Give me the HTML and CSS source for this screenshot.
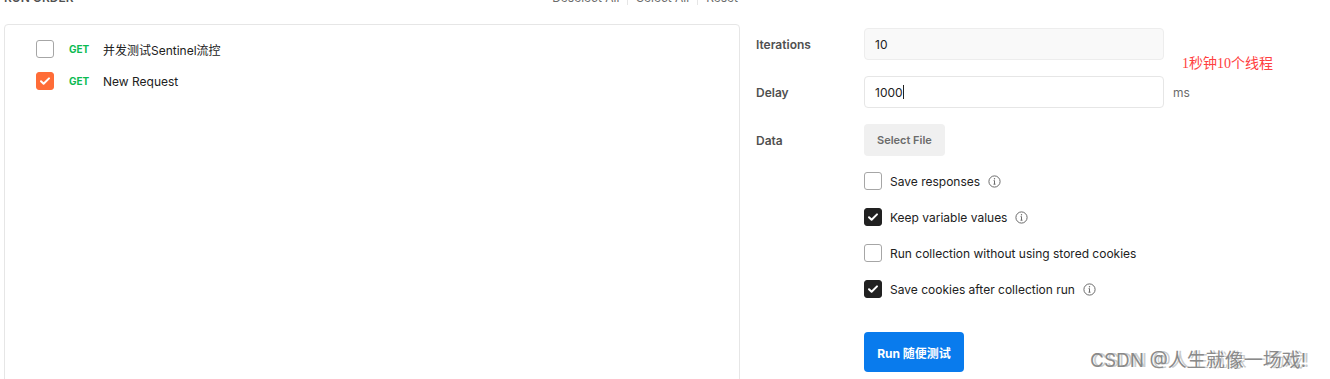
FILE: index.html
```html
<!DOCTYPE html>
<html lang="en">
<head>
    <meta charset="UTF-8">
    <meta name="viewport" content="width=device-width, initial-scale=1.0">
    <title>Collection Runner</title>
    <link rel="stylesheet" href="styles.css">
</head>
<body>

<div class="runner">
    <div class="order-col">
        <div class="order-head">
            <span class="order-title">RUN ORDER</span>
            <div class="order-links">
                <a href="#">Deselect All</a>
                <a href="#">Select All</a>
                <a href="#">Reset</a>
            </div>
        </div>
        <div class="order-list">
            <div class="order-row">
                <span class="box"></span>
                <span class="method">GET</span>
                <span class="req-name">并发测试Sentinel流控</span>
            </div>
            <div class="order-row">
                <span class="box box-orange">
                    <svg width="12" height="12" viewBox="0 0 12 12"><path d="M2 6.2l2.6 2.6L10 3.4" fill="none" stroke="#fff" stroke-width="2" stroke-linecap="round" stroke-linejoin="round"/></svg>
                </span>
                <span class="method">GET</span>
                <span class="req-name">New Request</span>
            </div>
        </div>
    </div>

    <div class="settings">
        <div class="field">
            <label class="field-label">Iterations</label>
            <input class="text-input input-grey" type="text" value="10">
        </div>
        <div class="field">
            <label class="field-label">Delay</label>
            <div class="input-wrap"><span class="text-input">1000<span class="caret"></span></span></div>
            <span class="unit">ms</span>
        </div>
        <div class="field">
            <label class="field-label">Data</label>
            <button class="file-btn">Select File</button>
        </div>

        <div class="options">
            <div class="option">
                <span class="box box-small"></span>
                <span>Save responses</span>
                <svg class="info" width="13" height="13" viewBox="0 0 13 13"><circle cx="6.5" cy="6.5" r="5.6" fill="none" stroke="#6b6b6b" stroke-width="1"/><path d="M6.5 5.6v3.6M5.5 9.2h2M5.6 5.6h0.9" stroke="#6b6b6b" stroke-width="1" fill="none"/><circle cx="6.5" cy="3.8" r="0.7" fill="#6b6b6b"/></svg>
            </div>
            <div class="option">
                <span class="box box-small box-dark">
                    <svg width="12" height="12" viewBox="0 0 12 12"><path d="M2 6.2l2.6 2.6L10 3.4" fill="none" stroke="#fff" stroke-width="2" stroke-linecap="round" stroke-linejoin="round"/></svg>
                </span>
                <span>Keep variable values</span>
                <svg class="info" width="13" height="13" viewBox="0 0 13 13"><circle cx="6.5" cy="6.5" r="5.6" fill="none" stroke="#6b6b6b" stroke-width="1"/><path d="M6.5 5.6v3.6M5.5 9.2h2M5.6 5.6h0.9" stroke="#6b6b6b" stroke-width="1" fill="none"/><circle cx="6.5" cy="3.8" r="0.7" fill="#6b6b6b"/></svg>
            </div>
            <div class="option">
                <span class="box box-small"></span>
                <span>Run collection without using stored cookies</span>
            </div>
            <div class="option">
                <span class="box box-small box-dark">
                    <svg width="12" height="12" viewBox="0 0 12 12"><path d="M2 6.2l2.6 2.6L10 3.4" fill="none" stroke="#fff" stroke-width="2" stroke-linecap="round" stroke-linejoin="round"/></svg>
                </span>
                <span>Save cookies after collection run</span>
                <svg class="info" width="13" height="13" viewBox="0 0 13 13"><circle cx="6.5" cy="6.5" r="5.6" fill="none" stroke="#6b6b6b" stroke-width="1"/><path d="M6.5 5.6v3.6M5.5 9.2h2M5.6 5.6h0.9" stroke="#6b6b6b" stroke-width="1" fill="none"/><circle cx="6.5" cy="3.8" r="0.7" fill="#6b6b6b"/></svg>
            </div>
        </div>

        <button class="run-btn">Run 随便测试</button>

        <!-- note written on top of the screenshot -->
        <span class="note">1秒钟10个线程</span>
        <span class="watermark">CSDN @人生就像一场戏!</span>
    </div>
</div>

</body>
</html>
```

FILE: styles.css
```css
body {
  margin: 0;
  font-family: Inter, "Noto Sans", "Noto Sans CJK SC", sans-serif;
  color: #212121;
  background-color: white;
  overflow: hidden;
}

.runner {
  display: flex;
  margin-top: -9px;
  padding-left: 4px;
}

.order-col {
  width: 736px;
  display: flex;
  flex-direction: column;
}

.order-head {
  height: 33px;
  display: flex;
  justify-content: space-between;
  align-items: flex-start;
  font-size: 12px;
  line-height: 14px;
  color: #6b6b6b;
}

.order-title {
  font-weight: 600;
  color: #505050;
}

.order-links {
  display: flex;
}

.order-links a {
  color: #6b6b6b;
  text-decoration: none;
  padding: 0 8px;
  border-left: 1px solid #e6e6e6;
}

.order-links a:first-child {
  border-left: none;
}

.order-links a:last-child {
  padding-right: 2px;
}

.order-list {
  height: 400px;
  border: 1px solid #e6e6e6;
  border-radius: 4px;
  padding: 8px 0 0 31px;
}

.order-row {
  height: 32px;
  display: flex;
  align-items: center;
}

.box {
  width: 16px;
  height: 16px;
  border: 1px solid #a6a6a6;
  border-radius: 3px;
  display: flex;
  align-items: center;
  justify-content: center;
  flex-shrink: 0;
}

.box-orange {
  background-color: #ff6c37;
  border-color: #ff6c37;
}

.method {
  font-size: 10px;
  font-weight: 700;
  color: #0cbb52;
  margin-left: 15px;
  width: 34px;
}

.req-name {
  font-size: 12px;
}

.settings {
  position: relative;
  margin-left: 16px;
  padding-top: 37px;
  width: 560px;
}

.field {
  display: flex;
  align-items: center;
  margin-bottom: 16px;
}

.field-label {
  width: 108px;
  font-size: 12px;
  font-weight: 600;
  color: #505050;
}

.text-input {
  box-sizing: border-box;
  width: 300px;
  height: 32px;
  border: 1px solid #e6e6e6;
  border-radius: 4px;
  padding: 0 10px;
  font-family: inherit;
  font-size: 12px;
  color: #212121;
  background-color: white;
  display: flex;
  align-items: center;
  outline: none;
}

.input-grey {
  background-color: #f9f9f9;
  border-color: #ededed;
}

.caret {
  display: inline-block;
  width: 1px;
  height: 14px;
  background-color: #212121;
}

.unit {
  font-size: 12px;
  color: #6b6b6b;
  margin-left: 9px;
}

.file-btn {
  height: 32px;
  padding: 0 13px;
  border: none;
  border-radius: 4px;
  background-color: #f0f0f0;
  font-family: inherit;
  font-size: 11px;
  font-weight: 600;
  color: #6b6b6b;
}

.options {
  margin-left: 108px;
  margin-top: -9px;
}

.option {
  height: 36px;
  display: flex;
  align-items: center;
  font-size: 12px;
}

.box-small {
  margin-right: 8px;
}

.box-dark {
  background-color: #212121;
  border-color: #212121;
}

.info {
  margin-left: 8px;
}

.run-btn {
  margin-left: 108px;
  margin-top: 25px;
  width: 100px;
  height: 40px;
  border: none;
  border-radius: 4px;
  background-color: #097bed;
  color: white;
  font-family: inherit;
  font-size: 12px;
  font-weight: 700;
}

.note {
  position: absolute;
  left: 426px;
  top: 61px;
  font-family: "Liberation Serif", "Noto Sans CJK SC", serif;
  font-size: 14px;
  color: #ff4040;
}

.watermark {
  position: absolute;
  left: 334px;
  top: 354px;
  font-size: 19px;
  color: #8a8a8a;
  text-shadow: 3px 0 0 rgba(170, 170, 170, 0.6);
  white-space: nowrap;
}
```
